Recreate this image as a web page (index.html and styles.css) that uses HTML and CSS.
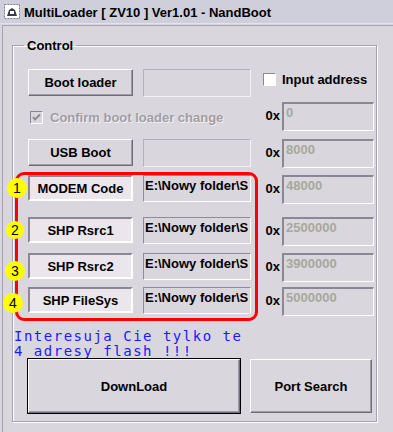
FILE: index.html
```html
<!DOCTYPE html>
<html lang="pl">
<head>
    <meta charset="UTF-8">
    <title>MultiLoader [ ZV10 ] Ver1.01 - NandBoot</title>
    <link rel="stylesheet" href="styles.css">
</head>
<body>
    <div class="window">
        <div class="titlebar">
            <svg class="app-icon" width="16" height="15" viewBox="0 0 16 15">
                <rect x="0.5" y="0.5" width="15" height="14" fill="#fff" stroke="#7a7a8a" stroke-dasharray="2 1"/>
                <path d="M3 12 L5 6 L8 4 L11 6 L13 12 Z" fill="#3a3a4a"/>
                <rect x="6" y="7" width="4" height="3" fill="#fff"/>
            </svg>
            <span class="title">MultiLoader [ ZV10 ] Ver1.01 - NandBoot</span>
        </div>

        <div class="client">
            <fieldset class="group">
                <legend>Control</legend>

                <!-- ramka z adnotacjami -->
                <div class="flash-frame"></div>
                <span class="num n1">1</span>
                <span class="num n2">2</span>
                <span class="num n3">3</span>
                <span class="num n4">4</span>

                <div class="rows">
                    <button class="btn">Boot loader</button>
                    <div class="path flat"></div>
                    <label class="check check-input"><span class="box"></span>Input address</label>

                    <label class="check disabled check-confirm">
                        <span class="box">
                            <svg width="9" height="9" viewBox="0 0 9 9"><path d="M1 4 L3 6.5 L8 1.5" fill="none" stroke="#8c8c8c" stroke-width="2"/></svg>
                        </span>Confirm boot loader change
                    </label>
                    <span class="hex-label">0x</span>
                    <div class="hex">0</div>

                    <button class="btn">USB Boot</button>
                    <div class="path flat"></div>
                    <span class="hex-label">0x</span>
                    <div class="hex">8000</div>

                    <div class="name">MODEM Code</div>
                    <div class="path">E:\Nowy folder\S</div>
                    <span class="hex-label">0x</span>
                    <div class="hex">48000</div>

                    <div class="name">SHP Rsrc1</div>
                    <div class="path">E:\Nowy folder\S</div>
                    <span class="hex-label">0x</span>
                    <div class="hex">2500000</div>

                    <div class="name">SHP Rsrc2</div>
                    <div class="path">E:\Nowy folder\S</div>
                    <span class="hex-label">0x</span>
                    <div class="hex">3900000</div>

                    <div class="name">SHP FileSys</div>
                    <div class="path">E:\Nowy folder\S</div>
                    <span class="hex-label">0x</span>
                    <div class="hex">5000000</div>
                </div>

                <p class="note">Interesuja Cie tylko te<br>4 adresy flash !!!</p>

                <div class="actions">
                    <button class="btn big default">DownLoad</button>
                    <button class="btn big">Port Search</button>
                </div>
            </fieldset>
        </div>
    </div>
</body>
</html>
```

FILE: styles.css
```css
/* Okno */
body {
    margin: 0;
    background-color: #d9d6dd;
    font-family: "Liberation Sans", Arial, sans-serif;
    font-size: 13px;
    font-weight: bold;
    color: #000;
    overflow: hidden;
}

.window {
    width: 393px;
    height: 432px;
}

.titlebar {
    height: 23px;
    display: flex;
    align-items: center;
    gap: 4px;
    padding-left: 4px;
    background-color: #cfcfdb;
    border-bottom: 1px solid #e4e2ea;
}

.app-icon {
    flex: none;
}

.title {
    padding-top: 2px;
}

.client {
    margin: 1px 0 0 2px;
    width: 389px;
    height: 407px;
    border-left: 1px solid #a6a2b6;
    border-top: 1px solid #a6a2b6;
    border-right: 1px solid #a6a2b6;
    padding: 0 0 0 9px;
}

/* Ramka "Control" */
.group {
    position: relative;
    width: 363px;
    margin: 12px 0 0 0;
    padding: 0 0 8px 0;
    border: 1px solid #a6a2b6;
    box-shadow: inset 1px 1px 0 #fff, 1px 1px 0 #fff;
}

.group legend {
    margin-left: 11px;
    padding: 0 3px;
    line-height: 15px;
}

.rows {
    display: grid;
    grid-template-columns: 115px 110px 29px 92px;
    grid-template-rows: 33px 37px 36px 42px 36px 34px 30px;
    margin: 16px 0 0 15px;
}

.rows > * {
    align-self: start;
}

/* Przyciski */
.btn {
    font: inherit;
    color: #000;
    background-color: #d9d6dd;
    width: 105px;
    height: 27px;
    padding: 0;
    border: 1px solid;
    border-color: #fff #6e6e78 #6e6e78 #fff;
    box-shadow: inset -1px -1px 0 #9e9ca8;
    cursor: pointer;
}

.btn.big {
    height: 54px;
}

.actions {
    display: flex;
    gap: 10px;
    margin-left: 15px;
}

.actions .default {
    width: 212px;
    outline: 1px solid #000;
    outline-offset: 0;
}

.actions .btn:last-child {
    width: 122px;
}

/* Pola */
.path {
    height: 27px;
    box-sizing: border-box;
    padding: 2px 0 0 1px;
    line-height: 15px;
    white-space: nowrap;
    overflow: hidden;
    border: 1px solid;
    border-color: #8e8c98 #fff #fff #8e8c98;
    margin-right: 2px;
}

.path.flat {
    border-color: #b4b0c0 #f4f2f6 #f4f2f6 #b4b0c0;
    height: 28px;
}

.name {
    width: 105px;
    height: 26px;
    box-sizing: border-box;
    display: flex;
    align-items: center;
    justify-content: center;
    background-color: #ebe5ec;
    border: 2px solid;
    border-color: #8a8894 #fff #fff #8a8894;
}

.hex-label {
    text-align: right;
    padding-right: 2px;
    margin-top: 6px;
    line-height: 15px;
}

.hex {
    height: 29px;
    box-sizing: border-box;
    padding: 1px 0 0 2px;
    line-height: 15px;
    color: #a8a89a;
    border: 2px solid;
    border-width: 2px 1px 1px 2px;
    border-color: #8a8894 #fff #fff #8a8894;
}

/* Pola wyboru */
.check {
    display: flex;
    align-items: center;
    gap: 6px;
    line-height: 15px;
}

.check-input {
    grid-column: 3 / 5;
    margin: 3px 0 0 10px;
}

.check-confirm {
    grid-column: 1 / 3;
    margin: 8px 0 0 2px;
    gap: 7px;
}

.check .box {
    width: 13px;
    height: 13px;
    box-sizing: border-box;
    border: 1px solid;
    border-color: #8a8894 #fff #fff #8a8894;
    background-color: #fff;
    display: flex;
    align-items: center;
    justify-content: center;
}

.check.disabled {
    color: #a09ea6;
    text-shadow: 1px 1px 0 #f2f0f4;
}

.check.disabled .box {
    background-color: #d9d6dd;
}

/* Notatka */
.note {
    margin: 12px 0 0 1px;
    font-family: "DejaVu Sans Mono", monospace;
    font-weight: normal;
    font-size: 14px;
    letter-spacing: 1.5px;
    line-height: 15px;
    height: 30px;
    color: #1a1aff;
}

/* Adnotacje */
.flash-frame {
    position: absolute;
    left: 2px;
    top: 119px;
    width: 237px;
    height: 143px;
    border: 3px solid #ff0000;
    border-radius: 9px;
    z-index: 1;
    pointer-events: none;
}

.num {
    position: absolute;
    width: 20px;
    height: 20px;
    border-radius: 50%;
    background-color: #ffff00;
    font-weight: normal;
    font-size: 14px;
    line-height: 20px;
    text-align: center;
    z-index: 2;
}

.n1 { left: -6px; top: 125px; }
.n2 { left: -7px; top: 168px; width: 18px; height: 18px; line-height: 18px; }
.n3 { left: -8px; top: 208px; }
.n4 { left: -10px; top: 240px; }
```
